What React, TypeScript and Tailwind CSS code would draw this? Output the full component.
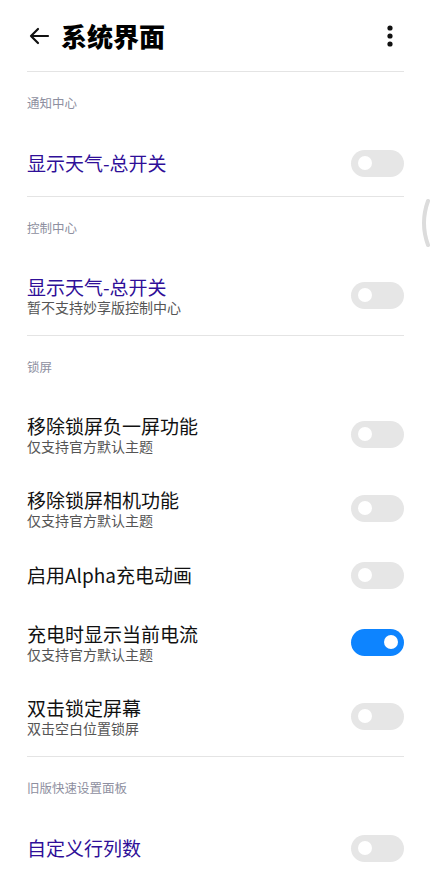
import React from 'react';

type Item = {
  title: string;
  sub?: string;
  accent?: boolean;
  on?: boolean;
};

type Section = {
  header: string;
  items: Item[];
};

const sections: Section[] = [
  { header: '通知中心', items: [{ title: '显示天气-总开关', accent: true }] },
  {
    header: '控制中心',
    items: [{ title: '显示天气-总开关', sub: '暂不支持妙享版控制中心', accent: true }],
  },
  {
    header: '锁屏',
    items: [
      { title: '移除锁屏负一屏功能', sub: '仅支持官方默认主题' },
      { title: '移除锁屏相机功能', sub: '仅支持官方默认主题' },
      { title: '启用Alpha充电动画' },
      { title: '充电时显示当前电流', sub: '仅支持官方默认主题', on: true },
      { title: '双击锁定屏幕', sub: '双击空白位置锁屏' },
    ],
  },
  { header: '旧版快速设置面板', items: [{ title: '自定义行列数', accent: true }] },
];

const Toggle: React.FC<{ on?: boolean }> = ({ on }) => (
  <div
    className={`flex h-[27px] w-[53px] shrink-0 items-center rounded-full ${
      on ? 'justify-end bg-[#0d84ff]' : 'justify-start bg-[#e6e6e6]'
    }`}
  >
    <div className="flex h-[27px] w-[27px] items-center justify-center">
      <div className="h-[14px] w-[14px] rounded-full bg-white" />
    </div>
  </div>
);

const Row: React.FC<{ item: Item }> = ({ item }) => (
  <div
    className={`flex items-center justify-between ${
      item.sub ? 'h-[74px]' : 'h-[60px]'
    }`}
  >
    <div className="flex flex-col">
      <span
        className={`text-[19px] leading-[24px] ${
          item.accent ? 'text-[#2f0f98]' : 'text-[#111111]'
        }`}
      >
        {item.title}
      </span>
      {item.sub && (
        <span className="text-[14px] leading-[16px] text-[#555555]">{item.sub}</span>
      )}
    </div>
    <Toggle on={item.on} />
  </div>
);

export default function App() {
  return (
    <div
      className="relative h-[873px] w-[430px] overflow-hidden bg-white"
      style={{ fontFamily: '"Noto Sans CJK SC", "Noto Sans", sans-serif' }}
    >
      <div className="pl-[27px] pr-[26px]">
        {/* Top bar */}
        <div className="flex h-[72px] items-center justify-between border-b border-[#e4e4e4]">
          <div className="flex items-center gap-[11px]">
            <svg width="22" height="22" viewBox="0 0 22 22" className="ml-[1px]">
              <path
                d="M20 11H3M10 4L3 11L10 18"
                fill="none"
                stroke="#111"
                strokeWidth="2.2"
                strokeLinecap="round"
                strokeLinejoin="round"
              />
            </svg>
            <span className="text-[26px] font-black leading-none text-black">系统界面</span>
          </div>
          <svg width="8" height="22" viewBox="0 0 8 22" className="mr-[10px]">
            <circle cx="4" cy="3" r="2.6" fill="#111" />
            <circle cx="4" cy="11" r="2.6" fill="#111" />
            <circle cx="4" cy="19" r="2.6" fill="#111" />
          </svg>
        </div>

        {sections.map((s, i) => (
          <div
            key={s.header}
            className={i < sections.length - 1 ? 'border-b border-[#e4e4e4] pb-[3px]' : ''}
          >
            <div className="pb-[22px] pt-[23px] text-[12.5px] leading-[16px] text-[#8e8fa0]">
              {s.header}
            </div>
            {s.items.map((item, j) => (
              <Row key={j} item={item} />
            ))}
          </div>
        ))}
      </div>

      {/* edge scroll indicator */}
      <svg
        width="14"
        height="50"
        viewBox="0 0 14 50"
        className="absolute right-0 top-[198px]"
      >
        <path
          d="M12 3 Q4 25 12 47"
          fill="none"
          stroke="#dcdcdc"
          strokeWidth="4"
          strokeLinecap="round"
        />
      </svg>
    </div>
  );
}
